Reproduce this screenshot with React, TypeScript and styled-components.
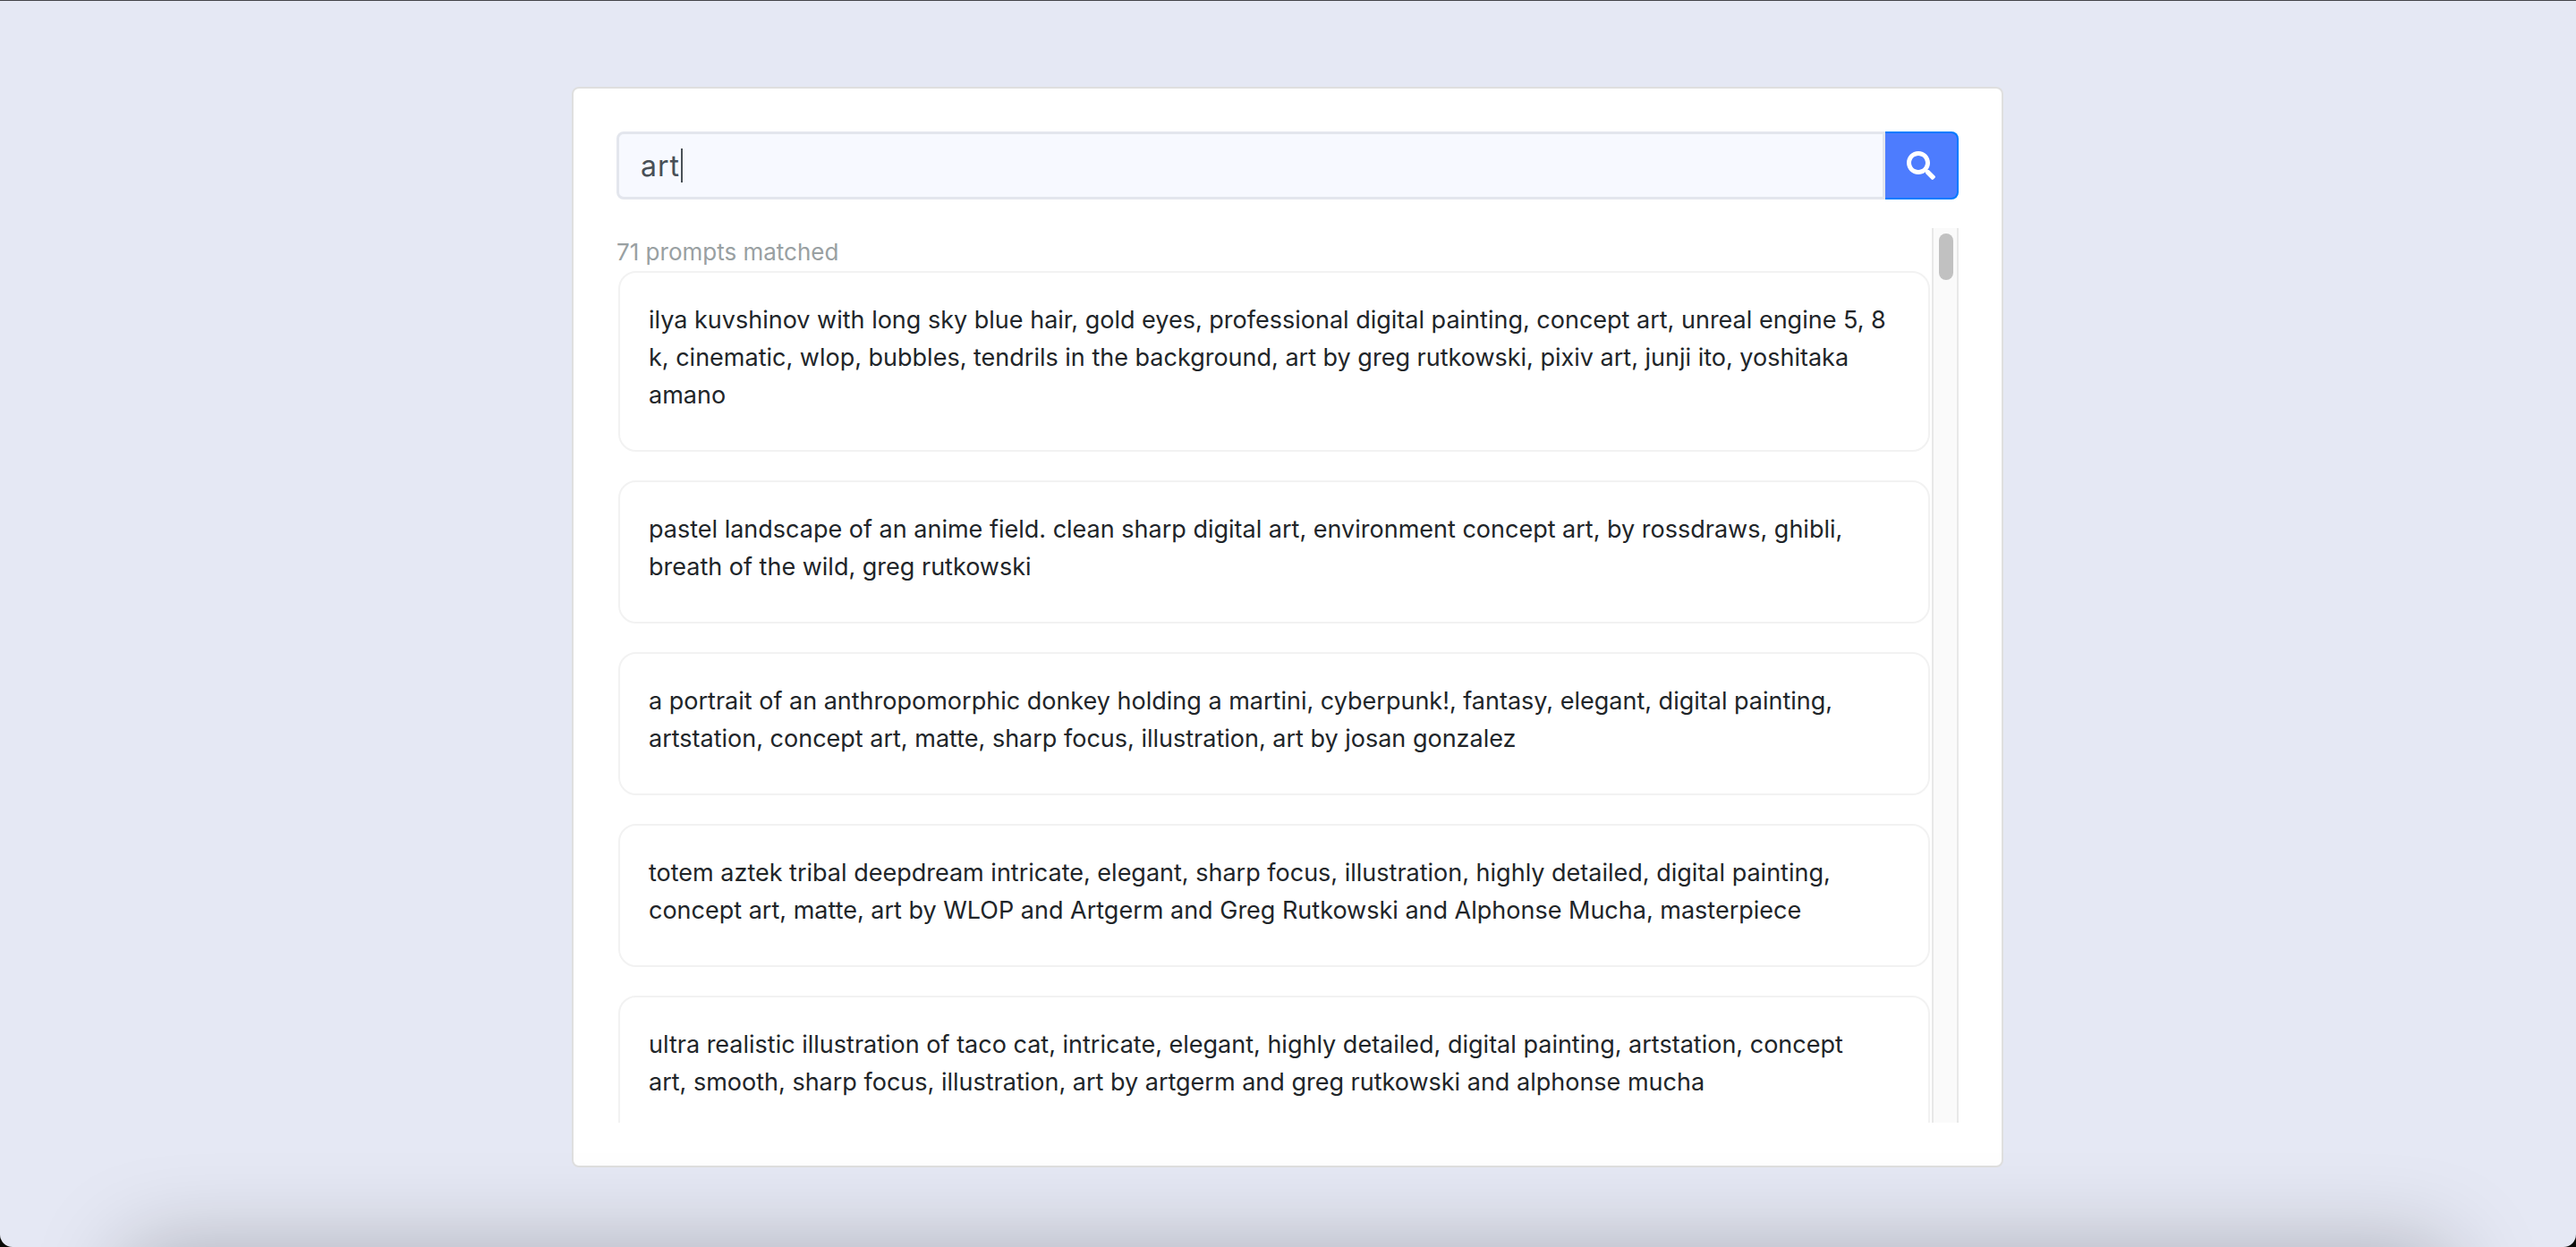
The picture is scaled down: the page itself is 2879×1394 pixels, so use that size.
import React, { useState } from "react";
import styled, { createGlobalStyle } from "styled-components";

const GlobalStyle = createGlobalStyle`
  *, *::before, *::after { box-sizing: border-box; }
  body {
    margin: 0;
    background: #0b0b08;
    color: #212529;
    font-family: Inter, "Liberation Sans", sans-serif;
    font-size: 27px;
    line-height: 42px;
  }
`;

const Page = styled.main`
  position: relative;
  display: flex;
  justify-content: center;
  align-items: flex-start;
  min-height: 100vh;
  padding: 96px 33px 88px 32px;
  overflow: hidden;
  background: #e5e8f4;
  border-top: 1px solid #444549;
  border-radius: 0 0 14px 14px;

  &::after {
    content: "";
    position: absolute;
    top: 100%;
    left: 140px;
    right: 140px;
    height: 200px;
    border-radius: 24px;
    box-shadow: 0 0 100px rgba(0, 0, 0, 0.25);
  }
`;

const Card = styled.section`
  width: 100%;
  max-width: 1600px;
  padding: 48px;
  background: #fff;
  border: 2px solid #dfdfdf;
  border-radius: 8px;
`;

const SearchForm = styled.form`
  display: flex;
  height: 76px;
  margin-bottom: 32px;
`;

const InputWrap = styled.div`
  position: relative;
  display: flex;
  flex: 1;
`;

const SearchInput = styled.input`
  width: 100%;
  padding: 0 24px;
  background: #f7f9ff;
  border: 3px solid #e3e6ed;
  border-radius: 8px 0 0 8px;
  outline: none;
  color: #495057;
  caret-color: transparent;
  font-family: inherit;
  font-size: 32px;
  letter-spacing: 1px;
`;

const Caret = styled.span`
  position: absolute;
  top: 19px;
  left: 72px;
  width: 2px;
  height: 38px;
  background: #495057;
`;

const SearchButton = styled.button`
  display: flex;
  align-items: center;
  justify-content: center;
  width: 82px;
  padding: 0;
  background: #4d7cfe;
  border: 2px solid #007bff;
  border-left: 0;
  border-radius: 0 8px 8px 0;
  color: #fff;
  cursor: pointer;
`;

const Results = styled.div`
  display: flex;
  height: 1000px;
`;

const List = styled.div`
  flex: 1;
  padding: 6px 2px 0 0;
  overflow-y: auto;
  scrollbar-width: none;
`;

const Count = styled.p`
  margin: 0;
  color: #99a0a2;
  font-size: 26px;
`;

const Prompts = styled.ul`
  display: flex;
  flex-direction: column;
  gap: 32px;
  margin: 0;
  padding: 0 0 32px 2px;
  list-style: none;
`;

const Prompt = styled.li`
  padding: 32px 32px 40px;
  border: 2px solid #f2f2f2;
  border-radius: 20px;
  white-space: pre-line;
`;

const Track = styled.div`
  width: 30px;
  padding: 6px 4px 6px 6px;
  background: #fafafa;
  border: solid #e8e8e8;
  border-width: 0 2px;
`;

const Thumb = styled.div`
  width: 16px;
  height: 52px;
  background: #c1c1c1;
  border-radius: 8px;
`;

const prompts = [
  "ilya kuvshinov with long sky blue hair, gold eyes, professional digital painting, concept art, unreal engine 5, 8 k, cinematic, wlop, bubbles, tendrils in the background, art by greg rutkowski, pixiv art, junji ito, yoshitaka amano",
  "pastel landscape of an anime field. clean sharp digital art, environment concept art, by rossdraws, ghibli, breath of the wild, greg rutkowski",
  "a portrait of an anthropomorphic donkey holding a martini, cyberpunk!, fantasy, elegant, digital painting, artstation, concept art, matte, sharp focus, illustration, art by josan gonzalez",
  "totem aztek tribal deepdream intricate, elegant, sharp focus, illustration, highly detailed, digital painting, concept art, matte, art by WLOP and Artgerm and Greg Rutkowski and Alphonse Mucha, masterpiece",
  "ultra realistic illustration of taco cat, intricate, elegant, highly detailed, digital painting, artstation, concept\nart, smooth, sharp focus, illustration, art by artgerm and greg rutkowski and alphonse mucha",
];

const SearchIcon = () => (
  <svg width="32" height="32" viewBox="0 0 512 512" fill="currentColor" aria-hidden="true">
    <path d="M505 442.7L405.300 343c-4.500-4.500-10.600-7-17-7H372c27.600-35.300 44-79.700 44-128C416 93.100 322.900 0 208 0S0 93.100 0 208s93.100 208 208 208c48.300 0 92.700-16.400 128-44v16.300c0 6.400 2.500 12.500 7 17l99.700 99.700c9.400 9.400 24.600 9.400 33.900 0l28.300-28.300c9.400-9.400 9.400-24.600.1-34zM208 336c-70.700 0-128-57.200-128-128 0-70.700 57.200-128 128-128 70.700 0 128 57.200 128 128 0 70.700-57.200 128-128 128z" />
  </svg>
);

export default function App() {
  const [query, setQuery] = useState("art");
  return (
    <>
      <GlobalStyle />
      <Page>
        <Card>
          <SearchForm role="search" onSubmit={(e) => e.preventDefault()}>
            <InputWrap>
              <SearchInput
                type="text"
                aria-label="Search prompts"
                value={query}
                onChange={(e) => setQuery(e.target.value)}
              />
              <Caret aria-hidden="true" />
            </InputWrap>
            <SearchButton type="submit" aria-label="Search">
              <SearchIcon />
            </SearchButton>
          </SearchForm>
          <Results>
            <List>
              <Count>71 prompts matched</Count>
              <Prompts>
                {prompts.map((text) => (
                  <Prompt key={text}>{text}</Prompt>
                ))}
              </Prompts>
            </List>
            <Track aria-hidden="true">
              <Thumb />
            </Track>
          </Results>
        </Card>
      </Page>
    </>
  );
}
